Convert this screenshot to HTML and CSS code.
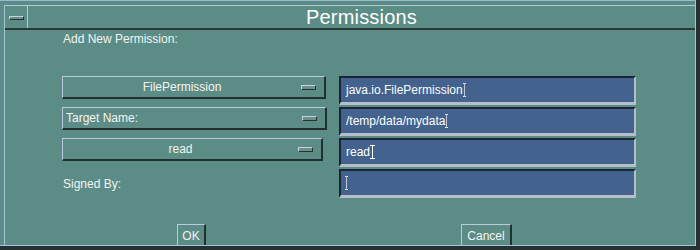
FILE: index.html
```html
<!DOCTYPE html>
<html lang="en">
<head>
  <meta charset="UTF-8">
  <title>Permissions</title>
  <link rel="stylesheet" href="styles.css">
</head>
<body>
  <div class="window">
    <div class="frame">
      <div class="titlebar">
        <div class="menu-box"><span class="menu-glyph"></span></div>
        <div class="title">Permissions</div>
      </div>

      <div class="content">
        <div class="intro">Add New Permission:</div>

        <div class="form-grid">
          <div class="choice w1">
            <span class="choice-label">FilePermission</span>
            <span class="indicator"></span>
          </div>
          <div class="field">java.io.FilePermission<span class="caret dotted"></span></div>

          <div class="choice w2">
            <span class="choice-label left">Target Name:</span>
            <span class="indicator"></span>
          </div>
          <div class="field">/temp/data/mydata<span class="caret dotted"></span></div>

          <div class="choice w3">
            <span class="choice-label">read</span>
            <span class="indicator"></span>
          </div>
          <div class="field">read<span class="caret solid"></span></div>

          <div class="signed">Signed By:</div>
          <div class="field"><span class="caret dotted first"></span></div>
        </div>

        <div class="footer">
          <div class="btn ok">OK</div>
          <div class="btn cancel">Cancel</div>
        </div>
      </div>
    </div>
  </div>
</body>
</html>
```

FILE: styles.css
```css
* {
  box-sizing: border-box;
  margin: 0;
  padding: 0;
}

body {
  width: 700px;
  height: 250px;
  overflow: hidden;
  background-color: #263030;
  font-family: 'Liberation Sans', Arial, sans-serif;
  color: #f2f4f2;
}

.window {
  width: 696px;
  height: 246px;
  background-color: #5c8c86;
  border-top: 1px solid #9db9d2;
  border-right: 1px solid #a9c2d8;
  border-bottom: 1px solid #a9c2d8;
  padding: 4px 0 0 4px;
}

.frame {
  height: 100%;
  border-left: 1px solid #a9c2d8;
}

.titlebar {
  display: flex;
  height: 25px;
  border-top: 1px solid #b4cadc;
  border-bottom: 2px solid #2a3836;
}

.menu-box {
  width: 23px;
  border-right: 1px solid #b4cadc;
  display: flex;
  align-items: center;
  justify-content: center;
  padding-top: 2px;
}

.menu-glyph {
  width: 15px;
  height: 4px;
  border-top: 1px solid #c4d4e2;
  border-left: 1px solid #c4d4e2;
  border-right: 1px solid #27332f;
  border-bottom: 1px solid #27332f;
  background-color: #6e8e8c;
}

.title {
  flex: 1;
  text-align: center;
  font-size: 20px;
  line-height: 22px;
  color: #fff;
  letter-spacing: 0.2px;
}

.content {
  padding: 2px 0 0 57px;
  font-size: 12px;
}

.intro {
  height: 14px;
  line-height: 14px;
  padding-left: 1px;
  margin-bottom: 30px;
}

.form-grid {
  display: grid;
  grid-template-columns: 264px 297px;
  grid-auto-rows: 29px;
  column-gap: 13px;
  row-gap: 2px;
}

.choice {
  height: 23px;
  display: flex;
  align-items: center;
  border-top: 1px solid #b9cadb;
  border-left: 1px solid #b9cadb;
  border-right: 2px solid #223030;
  border-bottom: 2px solid #223030;
}

.choice.w1 { width: 264px; }
.choice.w2 { width: 265px; }
.choice.w3 { width: 261px; }

.choice-label {
  flex: 1;
  text-align: center;
  line-height: 14px;
}

.choice-label.left {
  text-align: left;
  padding-left: 3px;
}

.indicator {
  width: 15px;
  height: 5px;
  margin-right: 8px;
  border-top: 1px solid #c4d4e2;
  border-left: 1px solid #c4d4e2;
  border-right: 1px solid #27332f;
  border-bottom: 1px solid #27332f;
  background-color: #6e8e8c;
}

.signed {
  align-self: center;
  padding-left: 1px;
  line-height: 14px;
}

.field {
  display: flex;
  align-items: center;
  height: 29px;
  padding-left: 5px;
  background-color: #43628e;
  border-top: 2px solid #1b2434;
  border-left: 2px solid #1b2434;
  border-right: 2px solid #b5bfcb;
  border-bottom: 3px solid #b5bfcb;
  color: #fff;
  line-height: 14px;
}

.caret {
  display: inline-block;
  width: 3px;
  height: 14px;
  margin-left: 0;
}

.caret.dotted {
  border-top: 1px dotted #e8ecf0;
  border-bottom: 1px dotted #e8ecf0;
  background: linear-gradient(to right, transparent 1px, rgba(240, 244, 248, 0.7) 1px, rgba(240, 244, 248, 0.7) 2px, transparent 2px);
}

.caret.solid {
  width: 5px;
  border-top: 1px solid #fff;
  border-bottom: 1px solid #fff;
  background: linear-gradient(to right, transparent 2px, #fff 2px, #fff 3px, transparent 3px);
}

.caret.first {
  margin-left: -1px;
}

.footer {
  display: flex;
  margin-top: 26px;
}

.btn {
  height: 21px;
  display: flex;
  align-items: center;
  justify-content: center;
  border-top: 1px solid #b9cadb;
  border-left: 1px solid #b9cadb;
  border-right: 2px solid #223030;
  font-size: 12px;
  line-height: 14px;
  padding-top: 1px;
}

.btn.ok {
  width: 29px;
  margin-left: 115px;
}

.btn.cancel {
  width: 51px;
  margin-left: 255px;
}
```
